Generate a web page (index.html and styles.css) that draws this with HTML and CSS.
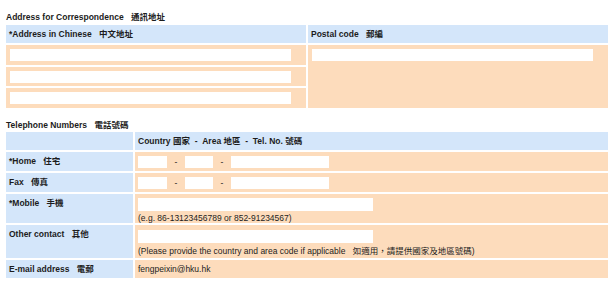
FILE: index.html
```html
<!DOCTYPE html>
<html lang="zh-Hant">
<head>
    <meta charset="UTF-8">
    <meta name="viewport" content="width=device-width, initial-scale=1.0">
    <title>Address for Correspondence</title>
    <link rel="stylesheet" href="styles.css">
</head>
<body>
    <h2 class="section-title">Address for Correspondence <span class="zh">通訊地址</span></h2>
    <table class="form-table address">
        <colgroup><col class="half"><col class="half"></colgroup>
        <tr class="head">
            <th>*Address in Chinese <span class="zh">中文地址</span></th>
            <th>Postal code <span class="zh">郵編</span></th>
        </tr>
        <tr class="r20">
            <td><input type="text" class="addr-input"></td>
            <td rowspan="3"><input type="text" class="addr-input"></td>
        </tr>
        <tr class="r19">
            <td><input type="text" class="addr-input"></td>
        </tr>
        <tr class="r20">
            <td><input type="text" class="addr-input"></td>
        </tr>
    </table>

    <h2 class="section-title tel-title">Telephone Numbers <span class="zh">電話號碼</span></h2>
    <table class="form-table phone">
        <colgroup><col class="label-col"><col class="value-col"></colgroup>
        <tr class="head">
            <th></th>
            <th>Country 國家 &nbsp;- &nbsp;Area 地區 &nbsp;- &nbsp;Tel. No. 號碼</th>
        </tr>
        <tr class="r19">
            <th>*Home <span class="zh">住宅</span></th>
            <td>
                <div class="tel-fields">
                    <input type="text" class="tel-cc">
                    <span class="dash">-</span>
                    <input type="text" class="tel-area">
                    <span class="dash">-</span>
                    <input type="text" class="tel-no">
                </div>
            </td>
        </tr>
        <tr class="r19">
            <th>Fax <span class="zh">傳真</span></th>
            <td>
                <div class="tel-fields">
                    <input type="text" class="tel-cc">
                    <span class="dash">-</span>
                    <input type="text" class="tel-area">
                    <span class="dash">-</span>
                    <input type="text" class="tel-no">
                </div>
            </td>
        </tr>
        <tr class="mobile">
            <th>*Mobile <span class="zh">手機</span></th>
            <td>
                <input type="text" class="wide-input">
                <p class="hint">(e.g. 86-13123456789 or 852-91234567)</p>
            </td>
        </tr>
        <tr class="other">
            <th>Other contact <span class="zh">其他</span></th>
            <td>
                <input type="text" class="wide-input">
                <p class="hint">(Please provide the country and area code if applicable <span class="zh">如適用，請提供國家及地區號碼)</span></p>
            </td>
        </tr>
        <tr class="email">
            <th>E-mail address <span class="zh">電郵</span></th>
            <td>fengpeixin@hku.hk</td>
        </tr>
    </table>
</body>
</html>
```

FILE: styles.css
```css
body {
    margin: 0;
    padding: 0;
    background-color: #fff;
    color: #1c1c1c;
    font-family: "Liberation Sans", "Noto Sans CJK TC", sans-serif;
    font-size: 8.5px;
    line-height: 10px;
}

.section-title {
    font-size: 8.5px;
    font-weight: bold;
    line-height: 10px;
    margin: 12px 0 1px 6px;
}

.tel-title {
    margin-top: 10px;
    margin-bottom: 0;
}

.zh {
    margin-left: 5px;
}

.form-table {
    border-collapse: separate;
    border-spacing: 2px;
    table-layout: fixed;
    width: 606px;
    margin-left: 4px;
}

.half {
    width: 300px;
}

.label-col {
    width: 127px;
}

.value-col {
    width: 473px;
}

.form-table th,
.form-table td {
    padding: 0;
    text-align: left;
    vertical-align: top;
    box-sizing: border-box;
}

.form-table th {
    background-color: #d4e6fa;
    font-weight: bold;
    padding: 4px 3px 0;
}

.form-table td {
    background-color: #fddcbc;
}

.form-table .head th {
    height: 18px;
    vertical-align: middle;
    padding-top: 0;
}

.r20 td, .r20 th { height: 20px; }
.r19 td, .r19 th { height: 19px; }
.mobile td, .mobile th { height: 29px; }
.other td, .other th { height: 33px; }
.email td, .email th { height: 18px; }

input {
    display: block;
    border: none;
    background-color: #fff;
    padding: 0;
    margin: 0;
    box-sizing: border-box;
    height: 12px;
}

.address td {
    padding: 4px 4px 0;
}

.addr-input {
    width: 281px;
}

.phone td {
    padding: 4px 3px 0;
}

.tel-fields {
    display: flex;
    align-items: center;
}

.tel-cc {
    width: 29px;
}

.tel-area {
    width: 28px;
}

.tel-no {
    width: 98px;
}

.dash {
    width: 18px;
    text-align: center;
}

.wide-input {
    width: 235px;
    height: 13px;
}

.hint {
    margin: 2px 0 0;
}

.other .wide-input {
    margin-top: 1px;
}

.other .hint {
    margin-top: 3px;
}

.phone .email td,
.phone .email th {
    padding-top: 4px;
}
```
